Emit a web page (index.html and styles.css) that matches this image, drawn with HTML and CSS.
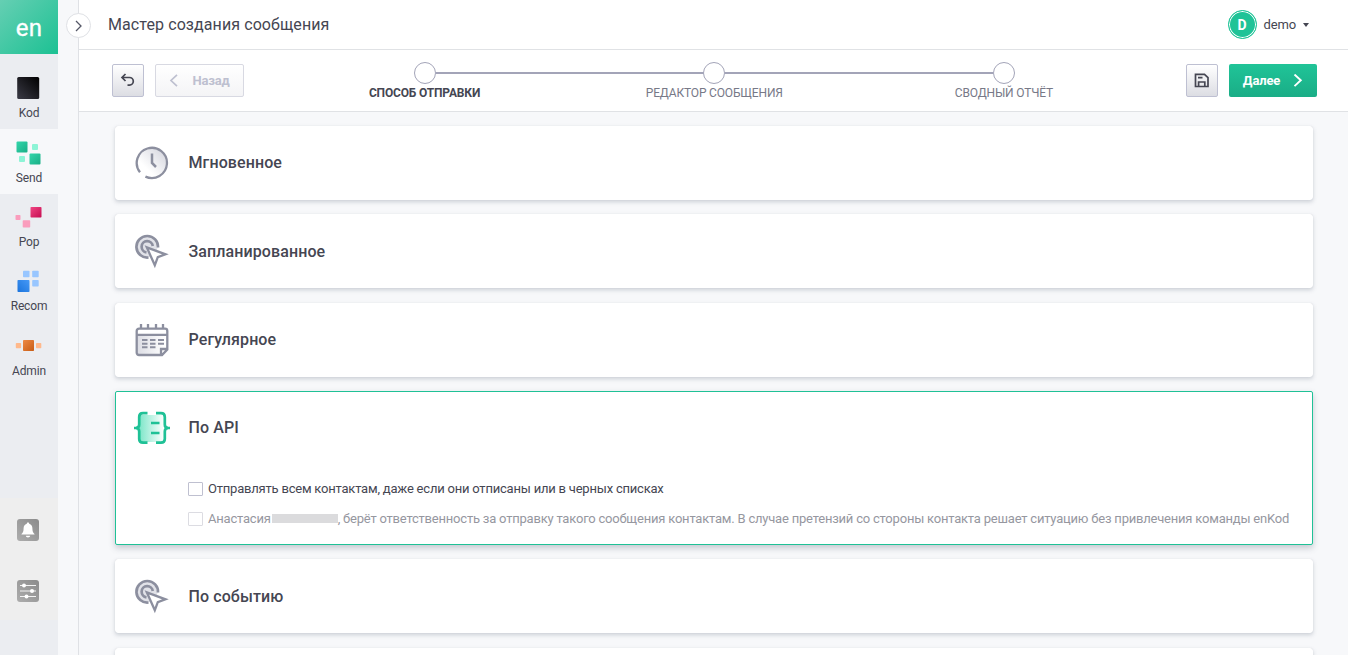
FILE: index.html
```html
<!DOCTYPE html>
<html lang="ru">
<head>
<meta charset="utf-8">
<title>Мастер создания сообщения</title>
<link rel="stylesheet" href="styles.css">
</head>
<body>
<svg class="defs" width="0" height="0" aria-hidden="true">
  <defs>
    <linearGradient id="kod" x1="1" y1="0" x2="0" y2="1"><stop offset="0" stop-color="#000"/><stop offset="1" stop-color="#3b3b46"/></linearGradient>
    <linearGradient id="green" x1="0" y1="0" x2="1" y2="1"><stop offset="0" stop-color="#33d6ab"/><stop offset="1" stop-color="#1aae86"/></linearGradient>
    <linearGradient id="pink" x1="0" y1="0" x2="1" y2="1"><stop offset="0" stop-color="#f04583"/><stop offset="1" stop-color="#c50d51"/></linearGradient>
    <linearGradient id="blue" x1="1" y1="0" x2="0" y2="1"><stop offset="0" stop-color="#4699f6"/><stop offset="1" stop-color="#1b74dd"/></linearGradient>
    <linearGradient id="orange" x1="0" y1="0" x2="1" y2="1"><stop offset="0" stop-color="#ee8945"/><stop offset="1" stop-color="#c75c15"/></linearGradient>
    <linearGradient id="gray" x1="1" y1="0" x2="0" y2="1"><stop offset="0" stop-color="#8b8b8b"/><stop offset="1" stop-color="#adadad"/></linearGradient>
    <linearGradient id="dim" x1="1" y1="0" x2="0" y2="1"><stop offset="0" stop-color="#d2d3dc"/><stop offset=".7" stop-color="#fff"/></linearGradient>
    <linearGradient id="dimx"><stop offset="0" stop-color="#dcdde4"/><stop offset="1" stop-color="#fff"/></linearGradient>
    <linearGradient id="mint"><stop offset="0" stop-color="#7be6c8"/><stop offset="1" stop-color="#fff"/></linearGradient>
    <symbol id="pointer" viewBox="0 0 36 36">
      <circle cx="13.2" cy="12.800" r="10.5" fill="#e1e2e8"/>
      <path d="M14.500 23.500A10.800 10.800 0 1 1 24 13.500M12.500 18.300A5.600 5.600 0 1 1 18.800 12" fill="none" stroke="#8c8f9f" stroke-width="2.700"/>
      <path d="M12.800 13.300L31.500 20.300L23.800 23.200L20.800 31.300Z" fill="#fff" stroke="#8c8f9f" stroke-width="2.300"/>
    </symbol>
  </defs>
</svg>
<div class="app">
  <nav class="rail">
    <div class="logo">en</div>
    <a class="nav nav-first"><svg width="28" height="28"><rect x="3.2" y="3" width="22" height="22" rx="1.5" fill="url(#kod)"/></svg><span>Kod</span></a>
    <a class="nav nav-active"><svg width="28" height="28"><rect x="2.5" y="2.5" width="11" height="11" rx="1" fill="url(#green)"/><rect x="18" y="5" width="6" height="6" rx="1" fill="#8df4d6"/><rect x="5" y="17" width="6" height="6" rx="1" fill="#8df4d6"/><rect x="15.5" y="14.5" width="11" height="11" rx="1" fill="url(#green)"/></svg><span>Send</span></a>
    <a class="nav"><svg width="28" height="28"><rect x="16.5" y="3" width="11" height="10.5" rx=".8" fill="url(#pink)"/><rect x="1.5" y="11" width="5" height="5" rx=".8" fill="#fa9dbd"/><rect x="8.7" y="16.3" width="7.5" height="7.2" rx=".8" fill="#fa9dbd"/></svg><span>Pop</span></a>
    <a class="nav"><svg width="28" height="28"><rect x="9" y="2.8" width="6.5" height="6.5" rx=".8" fill="#98c6ff"/><rect x="18.2" y="2.8" width="6.5" height="6.5" rx=".8" fill="#98c6ff"/><rect x="3.5" y="12" width="12" height="12" rx=".8" fill="url(#blue)"/><rect x="18.2" y="12" width="6.5" height="6.5" rx=".8" fill="#98c6ff"/></svg><span>Recom</span></a>
    <a class="nav"><svg width="28" height="28"><rect x="1.8" y="11" width="5.3" height="5.3" rx=".8" fill="#ffb98c"/><rect x="9" y="8" width="11" height="11" rx=".8" fill="url(#orange)"/><rect x="22" y="11" width="5.3" height="5.3" rx=".8" fill="#ffb98c"/></svg><span>Admin</span></a>
    <div class="tools">
      <svg width="24" height="24"><rect x="1" y="1" width="22" height="22" rx="3" fill="url(#gray)"/><path d="M12 4.6c.8 0 1.2.5 1.2 1.1 2.2.6 3.2 2.3 3.2 4.6 0 3 .6 4.2 2.1 5.8v.5h-13v-.5c1.500-1.600 2.100-2.800 2.100-5.800 0-2.300 1-4 3.200-4.600 0-.6.4-1.100 1.200-1.100zM9.800 17.800h4.400c-.2 1-1 1.600-2.200 1.600s-2-.6-2.200-1.600z" fill="#fff"/></svg>
      <svg width="24" height="24"><rect x="1" y="1" width="22" height="22" rx="3" fill="url(#gray)"/><path d="M4 6.500h16M4 12h16M4 17.500h16" stroke="#f3f3f3" stroke-width="1.200"/><circle cx="8" cy="6.500" r="2" fill="#fff"/><circle cx="16" cy="12" r="2" fill="#fff"/><circle cx="10.500" cy="17.500" r="2" fill="#fff"/></svg>
    </div>
  </nav>
  <div class="gutter"><button class="expand" aria-label="Развернуть"><svg width="24" height="24"><path d="M10 7l5 5-5 5" fill="none" stroke="#555767" stroke-width="1.300"/></svg></button></div>
  <main class="main">
    <header class="header">
      <h1 class="title">Мастер создания сообщения</h1>
      <div class="user"><span class="avatar">D</span><span class="name">demo</span><i class="caret"></i></div>
    </header>
    <div class="toolbar">
      <div class="actions">
        <button class="btn btn-icon" aria-label="Отменить"><svg width="16" height="16"><path d="M2.200 4.500h7.300a3.800 3.800 0 0 1 0 7.600H7.500M5.500 1L2 4.500 5.500 8" fill="none" stroke="#454652" stroke-width="1.700"/></svg></button>
        <button class="btn btn-back" disabled><svg width="10" height="14"><path d="M8 .8L2 6.500l6 5.700" fill="none" stroke="#bec0d0" stroke-width="1.700"/></svg><span>Назад</span></button>
      </div>
      <div class="steps">
        <div class="step step-current"><i class="dot"></i><span class="label">СПОСОБ ОТПРАВКИ</span></div>
        <div class="step"><i class="dot"></i><span class="label">РЕДАКТОР СООБЩЕНИЯ</span></div>
        <div class="step"><i class="dot"></i><span class="label">СВОДНЫЙ ОТЧЁТ</span></div>
      </div>
      <div class="actions">
        <button class="btn btn-icon" aria-label="Сохранить"><svg width="16" height="16"><path d="M1.500 1.300h9l3.500 3.300v8.900H1.500zM4.600 13.500V9h6.200v4.500M4 4.700h4.500" fill="none" stroke="#454652" stroke-width="1.700"/></svg></button>
        <button class="btn btn-next"><span>Далее</span><svg width="10" height="14"><path d="M1.500 .5L7.800 6.300l-6.300 5.800" fill="none" stroke="#fff" stroke-width="1.900"/></svg></button>
      </div>
    </div>
    <div class="list">
      <section class="card"><div class="row"><svg width="36" height="36"><circle cx="18" cy="18" r="14" fill="url(#dim)"/><path d="M6 27.300A15.100 15.100 0 1 1 11.400 31.600" fill="none" stroke="#8c8f9f" stroke-width="2.300"/><path d="M18 8.500V18l4 4" fill="none" stroke="#8c8f9f" stroke-width="2.500"/></svg><h2>Мгновенное</h2></div></section>
      <section class="card"><div class="row row-low"><svg width="36" height="36"><use href="#pointer"/></svg><h2>Запланированное</h2></div></section>
      <section class="card"><div class="row"><svg width="36" height="36"><rect x="3" y="14" width="28" height="18" fill="url(#dimx)"/><path d="M28 33H5a2.300 2.300 0 0 1-2.300-2.300V9A2.300 2.300 0 0 1 5 6.700h26A2.300 2.300 0 0 1 33.300 9v18.500zM3 12.800h30M27 33v-6H33M7 2v5.500M14 2v5.500M22 2v5.500M29 2v5.500" fill="none" stroke="#8c8f9f" stroke-width="2.300"/><path d="M8 18h5.500M16 18h5.500M24 18h6M8 21.700h5.500M16 21.700h5.500M24 21.700h6M8 25.300h5.500M16 25.300h5.500" stroke="#8c8f9f" stroke-width="1.900"/></svg><h2>Регулярное</h2></div></section>
      <section class="card card-selected">
        <div class="row"><svg width="36" height="36"><rect x="5" y="5" width="25" height="27" fill="url(#mint)"/><path d="M13.500 3.200H9Q5.200 3.200 5.200 7v7.500q0 3.300-3.200 3.500 3.200.2 3.200 3.500V29q0 3.700 3.800 3.700h4.500M22 3.200h5q3.800 0 3.800 3.800v7.500q0 3.300 3.200 3.500-3.200.2-3.200 3.500V29q0 3.700-3.800 3.700h-5" fill="none" stroke="#1fc196" stroke-width="2.700"/><path d="M0 18h4M32 18h4M17 13h8.500M17 23h8.500" stroke="#1fc196" stroke-width="2.500"/></svg><h2>По API</h2></div>
        <div class="options">
          <label class="check"><i class="box"></i><span>Отправлять всем контактам, даже если они отписаны или в черных списках</span></label>
          <label class="check check-disabled"><i class="box"></i><span>Анастасия</span><i class="redacted"></i><span>, берёт ответственность за отправку такого сообщения контактам. В случае претензий со стороны контакта решает ситуацию без привлечения команды enKod</span></label>
        </div>
      </section>
      <section class="card"><div class="row row-low"><svg width="36" height="36"><use href="#pointer"/></svg><h2>По событию</h2></div></section>
      <section class="card"></section>
    </div>
  </main>
</div>
</body>
</html>
```
FILE: styles.css
```css
* { box-sizing: border-box; }
body { margin: 0; height: 655px; overflow: hidden; font-family: Roboto, "Liberation Sans", sans-serif; color: #454652; background: #f7f8fa; }
svg { display: block; flex: none; }
.defs { position: absolute; }
h1, h2 { margin: 0; }
button { font-family: inherit; padding: 0; }
.app { display: flex; height: 655px; }

.rail { width: 58px; flex: none; display: flex; flex-direction: column; background: #ebedf1; }
.logo { height: 54px; flex: none; padding-top: 2px; text-align: center; line-height: 52px; font-size: 24px; letter-spacing: .2px; -webkit-text-stroke: .3px #fff; color: #fff; background: linear-gradient(135deg, #65cfb3, #1cc193); }
.nav { height: 64.300px; flex: none; padding-top: 9.500px; display: flex; flex-direction: column; align-items: center; font-size: 12px; line-height: 16px; letter-spacing: -.150px; }
.nav svg { margin-right: 2px; }
.nav span { margin-top: 2.500px; }
.nav-first { height: 75px; padding-top: 20px; }
.nav-first span { margin-top: 3px; }
.nav-active { height: 65px; background: #f7f8fa; }
.nav-active span { margin-top: 3px; }
.tools { margin-top: auto; margin-bottom: 35px; height: 122px; flex: none; padding: 19.500px 2px 0 0; display: flex; flex-direction: column; align-items: center; gap: 37px; background: #eee; }

.gutter { width: 21px; flex: none; border-right: 1px solid #dfe1e5; }
.expand { position: relative; z-index: 2; display: block; width: 25px; height: 25px; margin: 13px 0 0 8px; border: 1px solid #dfe1e5; border-radius: 50%; background: #fff; }
.expand svg { margin: -.500px 0 0 -1px; }

.main { flex: 1; min-width: 0; height: 655px; overflow: hidden; display: flex; flex-direction: column; }
.header { height: 50px; flex: none; display: flex; align-items: center; justify-content: space-between; padding: 0 39px 0 29px; background: #fff; border-bottom: 1px solid #e0e2e5; }
.title { font-size: 16px; font-weight: 400; line-height: 24px; letter-spacing: .090px; }
.user { display: flex; align-items: center; font-size: 13px; letter-spacing: -.150px; }
.avatar { width: 29px; height: 29px; border-radius: 50%; border: 1px solid #1fc397; box-shadow: inset 0 0 0 1px #fff; background: #1fc397; color: #fff; font-weight: 700; line-height: 28px; text-align: center; font-size: 14px; }
.name { margin: 0 7px; }
.caret { border: 3.500px solid transparent; border-top: 4px solid #454652; border-bottom: 0; }

.toolbar { height: 62px; flex: none; display: flex; align-items: flex-start; justify-content: space-between; padding: 14px 31px 0 33px; background: #fff; border-bottom: 1px solid #e0e2e5; }
.actions { display: flex; gap: 11px; }
.btn { height: 33px; display: flex; align-items: center; justify-content: center; border: 1px solid #bec0d2; border-radius: 2px; background: linear-gradient(#fff, #dcdde3); font-size: 13px; font-weight: 700; letter-spacing: -.150px; }
.btn-icon { width: 32px; }
.btn-back { width: 89px; gap: 13px; color: #bec0d0; border-color: #d8d9e2; background: linear-gradient(#fff, #f4f4f6); }
.btn-next { width: 88px; gap: 13px; color: #fff; border: 0; background: linear-gradient(#20c498, #1aad86); }
.steps { display: flex; margin: -2px 1.500px 0 0; }
.step { width: 289.700px; position: relative; display: flex; flex-direction: column; align-items: center; }
.step:not(:last-child)::after { content: ""; position: absolute; top: 10px; left: calc(50% + 11px); width: 268px; height: 2px; background: #a3a4b8; }
.dot { width: 22px; height: 22px; border: 1px solid #a3a4b8; border-radius: 50%; background: #fff; }
.label { margin-top: 1px; font-size: 12px; line-height: 16px; letter-spacing: -.160px; color: #777987; white-space: nowrap; }
.step-current .label { color: #454652; font-weight: 700; }

.list { flex: 1; min-height: 0; overflow: hidden; padding: 13.800px 35px 0 36px; display: flex; flex-direction: column; gap: 14.400px; }
.card { height: 74px; flex: none; background: #fff; border: 1px solid #fff; border-radius: 3px; box-shadow: 0 2px 4px rgba(80, 95, 115, .26), 0 0 1px rgba(80, 95, 115, .15); }
.card-selected { height: 153.800px; border-color: #1fc196; border-radius: 2px; box-shadow: 0 3px 6px rgba(80, 90, 110, .3); }
.row { height: 72px; padding-left: 18px; display: flex; align-items: center; gap: 18.500px; }
.row-low { padding-top: 1px; }
.row h2 { font-size: 16px; line-height: 20px; font-weight: 500; letter-spacing: .100px; }
.options { padding: 15px 0 0 72px; display: flex; flex-direction: column; gap: 10px; }
.check { height: 20px; display: flex; align-items: center; font-size: 13px; letter-spacing: -.208px; white-space: nowrap; }
.box { width: 15px; height: 14px; margin-right: 5px; flex: none; border: 1px solid #bfc0d0; border-radius: 1px; }
.check-disabled { color: #96979f; }
.check-disabled .box { border-color: #dcdce2; }
.redacted { width: 66px; height: 9px; flex: none; margin-left: 1px; background: #dbdbdd; }
```
